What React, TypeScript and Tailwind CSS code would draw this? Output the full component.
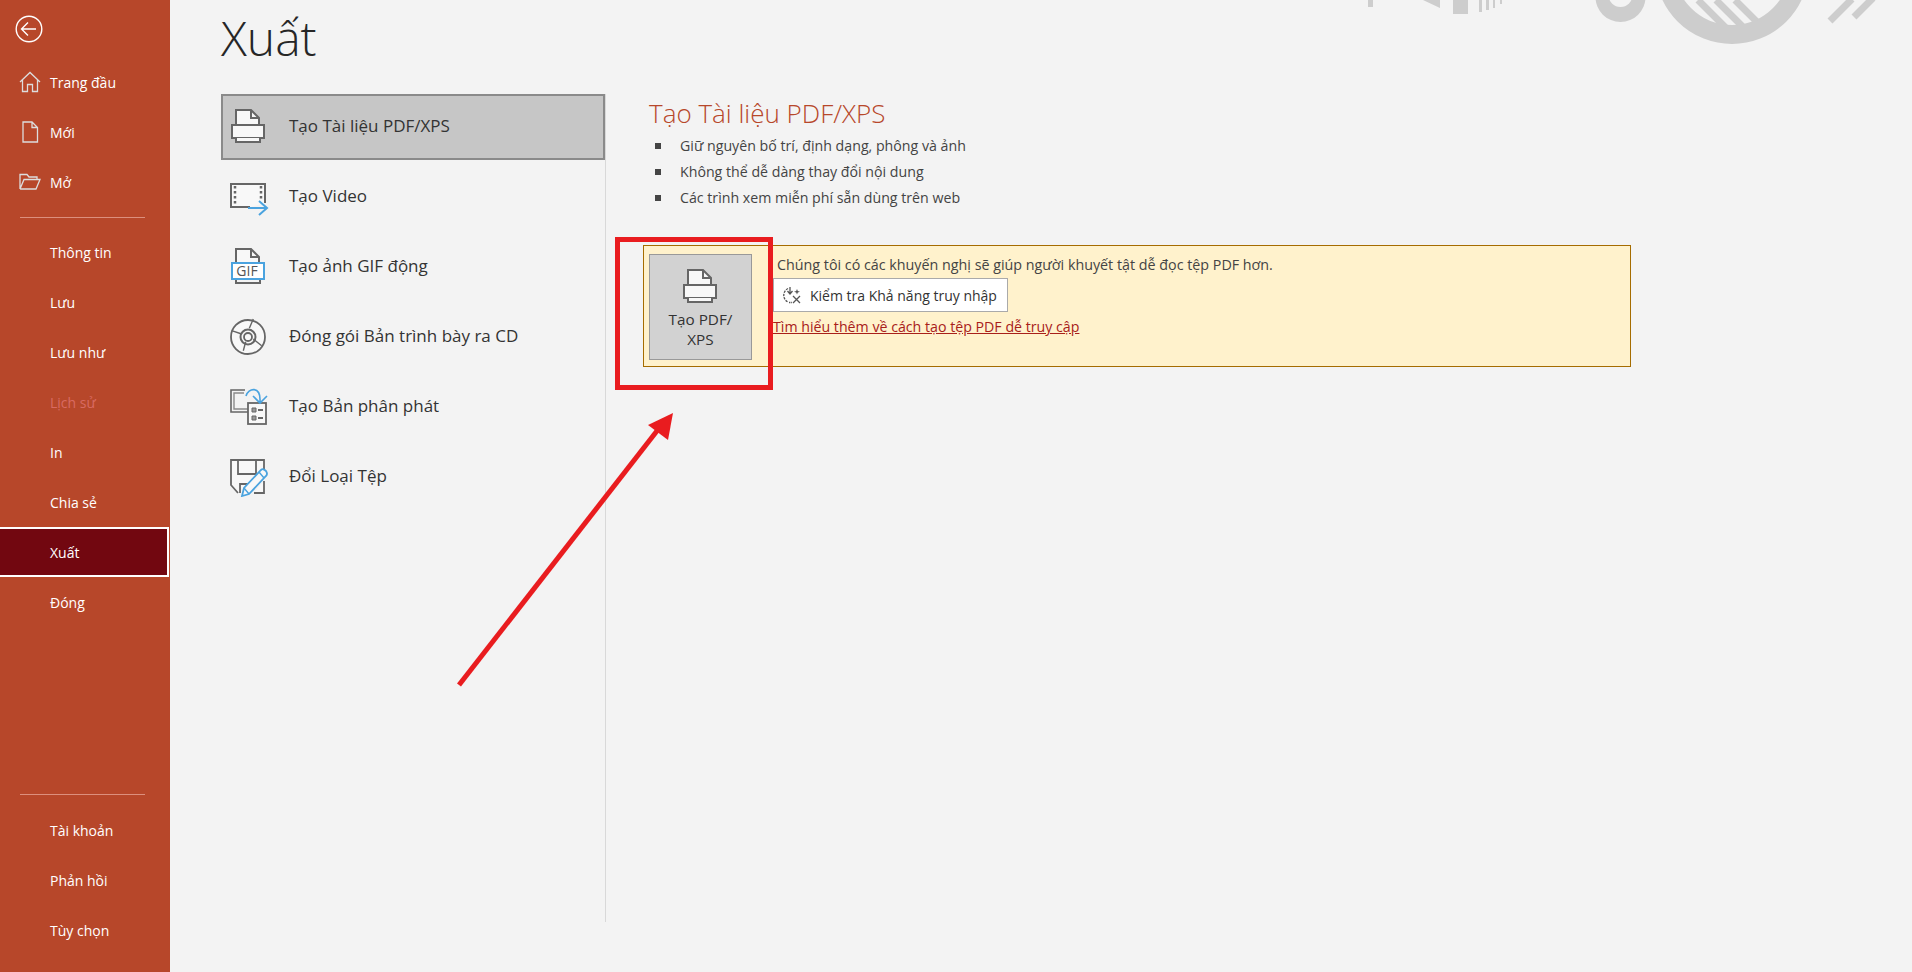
import type { ReactNode } from "react";

const topItems = ["Thông tin", "Lưu", "Lưu như", "Lịch sử", "In", "Chia sẻ", "Xuất", "Đóng"];
const bottomItems = ["Tài khoản", "Phản hồi", "Tùy chọn"];
const bullets = [
  "Giữ nguyên bố trí, định dạng, phông và ảnh",
  "Không thể dễ dàng thay đổi nội dung",
  "Các trình xem miễn phí sẵn dùng trên web",
];

function PrinterIcon() {
  return (
    <svg width="40" height="40" viewBox="0 0 40 40" fill="none" stroke="#666" strokeWidth="2">
      <path d="M6 18V3H21L29 11V18" fill="#f8f8f8" />
      <path d="M21 3V11H29" />
      <rect x="2" y="18" width="32" height="13" fill="#f8f8f8" />
      <path d="M6 31V35H30V31" fill="#f8f8f8" />
    </svg>
  );
}

function VideoIcon() {
  return (
    <svg width="40" height="40" viewBox="0 0 40 40" fill="none" stroke="#666" strokeWidth="2">
      <path d="M20 30H1V7H35V26" fill="#f8f8f8" />
      <path d="M5 9V29M31 9V24" strokeWidth="2.5" strokeDasharray="2.5 2.5" />
      <path d="M18 31H37M29 24L37 31L29 38" stroke="#4aa3df" />
    </svg>
  );
}

function GifIcon() {
  return (
    <svg width="40" height="40" viewBox="0 0 40 40" fill="none" stroke="#666" strokeWidth="2">
      <path d="M6 16V2H21L29 10V16" fill="#f8f8f8" />
      <path d="M21 2V10H29" />
      <path d="M6 32V36H30V32" />
      <rect x="2" y="16" width="32" height="16" fill="#fff" stroke="#4aa3df" />
      <text x="17" y="29" textAnchor="middle" fontSize="14" fill="#555" stroke="none" fontFamily="'Open Sans', sans-serif">GIF</text>
    </svg>
  );
}

function CdIcon() {
  return (
    <svg width="40" height="40" viewBox="0 0 40 40" fill="none" stroke="#666" strokeWidth="1.8">
      <circle cx="18" cy="20" r="17" fill="#f8f8f8" />
      <circle cx="18" cy="20" r="7.5" strokeWidth="2" />
      <circle cx="18" cy="20" r="4" />
      <path d="M1.7 13.7L11.7 17M23.3 2L19.3 11.3M31.7 28.7L23.3 22M13.3 33.7L15.7 24.7" strokeWidth="1.4" />
    </svg>
  );
}

function HandoutIcon() {
  return (
    <svg width="40" height="40" viewBox="0 0 40 40" fill="none" stroke="#666" strokeWidth="1.6">
      <path d="M18 25H1V3H15" />
      <path d="M18 22H4V6H14" strokeWidth="1.4" stroke="#8a8a8a" />
      <rect x="18" y="16" width="18" height="21" fill="#f8f8f8" strokeWidth="1.8" />
      <path d="M22 21H26V25H22ZM22 29H26V33H22Z" fill="#999" strokeWidth="1" />
      <path d="M28 23H33M28 31H33" strokeWidth="1.8" />
      <path d="M16 9C18 1 31 -2 30 15M23 9L30 16L37 9" stroke="#4aa3df" strokeWidth="1.6" />
    </svg>
  );
}

function SaveAsIcon() {
  return (
    <svg width="40" height="40" viewBox="0 0 40 40" fill="none" stroke="#666" strokeWidth="1.8">
      <path d="M8 36L1 28V3H34V12M34 24V36H24" fill="#f8f8f8" />
      <path d="M8 3V17H26V3" />
      <path d="M10 36V27H20" />
      <path d="M12 39L14 31L31 13Q33 11 36 14Q38 17 36 19L19 37Z" fill="#f8f8f8" stroke="#4aa3df" />
      <path d="M14 31L19 37M29 15L34 21" stroke="#4aa3df" strokeWidth="1.4" />
    </svg>
  );
}

function CheckIcon() {
  return (
    <svg width="20" height="18" viewBox="0 0 20 18" fill="none" stroke="#555" strokeWidth="1.3">
      <path d="M6 2.5A7.5 7.5 0 0 0 6 16" strokeDasharray="2.4 1" />
      <path d="M8 1V7M5.5 5L8 8L10.5 5" />
      <path d="M15 3L15.8 5L18 5.8L15.8 6.6L15 8.6L14.2 6.6L12 5.8L14.2 5Z" fill="#555" stroke="none" />
      <path d="M11 10L18 17M18 10L11 17" />
      <path d="M7 16.5H10" strokeDasharray="1.4 0.8" />
    </svg>
  );
}

const exportOptions: { label: string; icon: ReactNode; active?: boolean }[] = [
  { label: "Tạo Tài liệu PDF/XPS", icon: <PrinterIcon />, active: true },
  { label: "Tạo Video", icon: <VideoIcon /> },
  { label: "Tạo ảnh GIF động", icon: <GifIcon /> },
  { label: "Đóng gói Bản trình bày ra CD", icon: <CdIcon /> },
  { label: "Tạo Bản phân phát", icon: <HandoutIcon /> },
  { label: "Đổi Loại Tệp", icon: <SaveAsIcon /> },
];

function NavRow({ label, icon }: { label: string; icon?: ReactNode }) {
  const active = label === "Xuất";
  const disabled = label === "Lịch sử";
  return (
    <div
      className={
        active
          ? "flex items-center h-[50px] w-[169px] pl-[50px] bg-[#720710] border-y-2 border-r-2 border-white text-white"
          : disabled
            ? "flex items-center h-[50px] pl-[50px] text-[#d96a62]"
            : "flex items-center h-[50px] pl-[50px] text-white"
      }
    >
      {icon && <span className="flex items-center justify-center w-[24px] -ml-[32px] mr-[8px]">{icon}</span>}
      {label}
    </div>
  );
}

function Decoration() {
  return (
    <svg className="absolute top-0 left-[1360px]" width="552" height="50" viewBox="1360 0 552 50" fill="#cdcdcd">
      <defs>
        <clipPath id="inner">
          <circle cx="1732" cy="-32" r="58" />
        </clipPath>
      </defs>
      <rect x="1368" y="0" width="5" height="7" />
      <path d="M1423 0H1440V8Z" />
      <rect x="1453" y="0" width="15" height="14" />
      <rect x="1479" y="0" width="3" height="12" />
      <rect x="1486" y="0" width="3" height="10" />
      <rect x="1493" y="0" width="2" height="8" />
      <rect x="1500" y="0" width="2" height="4" />
      <circle cx="1620.5" cy="-3" r="25" />
      <circle cx="1620.5" cy="-5" r="12" fill="#f3f3f3" />
      <circle cx="1732" cy="-33" r="67.5" fill="none" stroke="#cdcdcd" strokeWidth="19" />
      <g clipPath="url(#inner)" stroke="#cdcdcd" strokeWidth="7">
        <path d="M1698 0L1738 40M1716 0L1756 40M1735 0L1775 40" />
      </g>
      <path d="M1830 21L1852 -1M1854 17L1873 -2" stroke="#cdcdcd" strokeWidth="7" />
    </svg>
  );
}

export default function App() {
  return (
    <div className="relative flex h-screen w-screen overflow-hidden bg-[#f3f3f3] font-['Open_Sans',sans-serif]">
      {/* sidebar */}
      <aside className="flex flex-col justify-between w-[170px] shrink-0 bg-[#b7472a] text-[14px]">
        <div>
          <div className="flex items-center h-[57px] pl-[15px]">
            <svg width="28" height="28" viewBox="0 0 28 28" fill="none" stroke="#fff" strokeWidth="1.4">
              <circle cx="14" cy="14" r="12.8" />
              <path d="M21 14H6.5M13 7.5L6.5 14L13 20.5" />
            </svg>
          </div>
          <NavRow
            label="Trang đầu"
            icon={
              <svg width="22" height="22" viewBox="0 0 22 22" fill="none" stroke="#ddd" strokeWidth="1.3">
                <path d="M1 11L11 1.5L21 11M3.5 9V20.5H8.5V13.5H13.5V20.5H18.5V9" />
              </svg>
            }
          />
          <NavRow
            label="Mới"
            icon={
              <svg width="18" height="22" viewBox="0 0 18 22" fill="none" stroke="#ddd" strokeWidth="1.3">
                <path d="M2 1H11L16.5 6.5V21H2ZM11 1V6.5H16.5" />
              </svg>
            }
          />
          <NavRow
            label="Mở"
            icon={
              <svg width="22" height="18" viewBox="0 0 22 18" fill="none" stroke="#ddd" strokeWidth="1.3">
                <path d="M1 16V1.5H8L10 4H18V6.5M1 16H17L21 6.5H5L1 16" />
              </svg>
            }
          />
          <div className="mt-[10px] mb-[9px] ml-[20px] w-[125px] h-px bg-[#dc8f7d]" />
          {topItems.map((label) => (
            <NavRow key={label} label={label} />
          ))}
        </div>
        <div className="pb-[17px]">
          <div className="mb-[10px] ml-[20px] w-[125px] h-px bg-[#dc8f7d]" />
          {bottomItems.map((label) => (
            <NavRow key={label} label={label} />
          ))}
        </div>
      </aside>

      {/* main */}
      <main className="flex-1 pl-[51px] text-[#444]">
        <h1 className="h-[94px] pt-[5px] text-[48px] leading-[66px] font-light text-[#262626]">Xuất</h1>
        <div className="flex">
          <div className="flex flex-col gap-[4px] w-[385px] h-[828px] border-r border-[#d8d8d8]">
            {exportOptions.map((opt) => (
              <div
                key={opt.label}
                className={
                  opt.active
                    ? "flex items-center h-[66px] pl-[7px] border-2 border-[#8a8a8a] bg-[#c6c6c6] text-[17px] text-[#333]"
                    : "flex items-center h-[66px] pl-[7px] border-2 border-transparent text-[17px] text-[#333]"
                }
              >
                <span className="w-[59px] shrink-0">{opt.icon}</span>
                <span className="pb-[2px]">{opt.label}</span>
              </div>
            ))}
          </div>

          <section className="pl-[37px]">
            <h2 className="ml-[6px] h-[39px] text-[26px] leading-[38px] font-light text-[#b7472a]">Tạo Tài liệu PDF/XPS</h2>
            <ul>
              {bullets.map((b) => (
                <li key={b} className="flex items-center h-[26px] ml-[12px] text-[14.2px]">
                  <span className="w-[6px] h-[6px] mr-[19px] bg-[#444]" />
                  {b}
                </li>
              ))}
            </ul>

            <div className="flex mt-[34px] w-[988px] h-[122px] pl-[5px] pt-[8px] border border-[#a56c00] bg-[#fff2cc]">
              <div className="flex flex-col items-center w-[103px] h-[106px] pt-[12px] border border-[#999] bg-[#d2d2d2] text-[15.3px] leading-[20px] text-center text-[#333]">
                <span className="block h-[42px] pl-[2px]"><PrinterIcon /></span>
                <span>Tạo PDF/<br />XPS</span>
              </div>
              <div className="ml-[21px] text-[14.3px]">
                <p className="ml-[4px] h-[24px] leading-[22px] whitespace-nowrap">Chúng tôi có các khuyến nghị sẽ giúp người khuyết tật dễ đọc tệp PDF hơn.</p>
                <button className="flex items-center gap-[8px] w-[235px] h-[34px] pl-[8px] border border-[#aaa] bg-white text-[14px] text-[#333]">
                  <CheckIcon />
                  Kiểm tra Khả năng truy nhập
                </button>
                <a className="block mt-[4px] leading-[22px] underline text-[#a8201a] text-[14.2px] whitespace-nowrap">Tìm hiểu thêm về cách tạo tệp PDF dễ truy cập</a>
              </div>
            </div>
          </section>
        </div>
      </main>

      <Decoration />

      {/* callout drawn over the screenshot */}
      <div className="absolute left-[615px] top-[237px] w-[158px] h-[153px] border-[5px] border-[#e91c1f]" />
      <svg className="absolute left-[450px] top-[405px]" width="230" height="290" viewBox="450 405 230 290" fill="#e91c1f">
        <path d="M459 685L660 427" stroke="#e91c1f" strokeWidth="5" />
        <path d="M673 413L648 425L668 440Z" />
      </svg>
    </div>
  );
}
